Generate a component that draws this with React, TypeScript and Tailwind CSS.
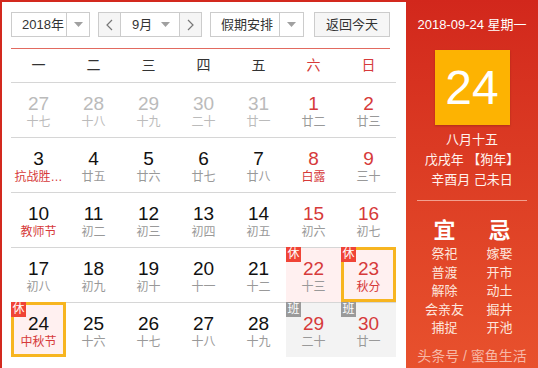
import React from "react";

type Day = {
  n: number;
  l: string;
  prev?: boolean;
  red?: boolean;
  lred?: boolean;
  badge?: "休" | "班";
  bg?: "pink" | "gray";
  sel?: boolean;
};

const rows: Day[][] = [
  [
    { n: 27, l: "十七", prev: true },
    { n: 28, l: "十八", prev: true },
    { n: 29, l: "十九", prev: true },
    { n: 30, l: "二十", prev: true },
    { n: 31, l: "廿一", prev: true },
    { n: 1, l: "廿二", red: true },
    { n: 2, l: "廿三", red: true },
  ],
  [
    { n: 3, l: "抗战胜…", lred: true },
    { n: 4, l: "廿五" },
    { n: 5, l: "廿六" },
    { n: 6, l: "廿七" },
    { n: 7, l: "廿八" },
    { n: 8, l: "白露", red: true, lred: true },
    { n: 9, l: "三十", red: true },
  ],
  [
    { n: 10, l: "教师节", lred: true },
    { n: 11, l: "初二" },
    { n: 12, l: "初三" },
    { n: 13, l: "初四" },
    { n: 14, l: "初五" },
    { n: 15, l: "初六", red: true },
    { n: 16, l: "初七", red: true },
  ],
  [
    { n: 17, l: "初八" },
    { n: 18, l: "初九" },
    { n: 19, l: "初十" },
    { n: 20, l: "十一" },
    { n: 21, l: "十二" },
    { n: 22, l: "十三", red: true, badge: "休", bg: "pink" },
    { n: 23, l: "秋分", red: true, lred: true, badge: "休", bg: "pink", sel: true },
  ],
  [
    { n: 24, l: "中秋节", lred: true, badge: "休", bg: "pink", sel: true },
    { n: 25, l: "十六" },
    { n: 26, l: "十七" },
    { n: 27, l: "十八" },
    { n: 28, l: "十九" },
    { n: 29, l: "二十", red: true, badge: "班", bg: "gray" },
    { n: 30, l: "廿一", red: true, badge: "班", bg: "gray" },
  ],
];

const weekdays = ["一", "二", "三", "四", "五", "六", "日"];

const yi = ["祭祀", "普渡", "解除", "会亲友", "捕捉"];
const ji = ["嫁娶", "开市", "动土", "掘井", "开池"];

function Caret() {
  return (
    <svg width="9" height="5" viewBox="0 0 9 5">
      <path d="M0 0 L9 0 L4.5 5 Z" fill="#a0a0a0" />
    </svg>
  );
}

function Chevron({ dir }: { dir: "left" | "right" }) {
  return (
    <svg width="7" height="12" viewBox="0 0 7 12">
      <polyline
        points={dir === "left" ? "6,1 1,6 6,11" : "1,1 6,6 1,11"}
        fill="none"
        stroke="#777"
        strokeWidth="1.2"
      />
    </svg>
  );
}

function Cell({ d }: { d: Day }) {
  const bg = d.bg === "pink" ? "bg-[#fff0f0]" : d.bg === "gray" ? "bg-[#f3f3f3]" : "";
  const num = d.prev ? "text-[#bbbbbb]" : d.red ? "text-[#d63a3a]" : "text-[#111]";
  const lunar = d.prev ? "text-[#bbbbbb]" : d.lred ? "text-[#d63a3a]" : "text-[#999]";
  return (
    <div className={`relative h-[54px] flex flex-col items-center pt-[10px] ${bg}`}>
      {d.sel && <div className="absolute -top-px left-0 right-0 bottom-0 border-[3px] border-[#f7b520]" />}
      <span className={`text-[19px] leading-[21px] font-['Liberation_Sans',sans-serif] ${num}`}>{d.n}</span>
      <span className={`text-[12px] leading-[17px] ${lunar}`}>{d.l}</span>
      {d.badge && (
        <span
          className={`absolute left-0 -top-px w-[15px] h-[15px] text-[12px] leading-[15px] text-center text-white ${
            d.badge === "休" ? "bg-[#f04436]" : "bg-[#9a9a9a]"
          }`}
        >
          {d.badge}
        </span>
      )}
    </div>
  );
}

export default function App() {
  return (
    <div className="flex w-[538px] h-[368px] overflow-hidden font-['Liberation_Sans','Noto_Sans_CJK_SC',sans-serif]">
      {/* calendar side */}
      <div className="w-[406px] bg-white border-t-2 border-l-2 border-[#d3291e] pl-[9px] pt-[10px]">
        <div className="flex h-[25px] text-[13px] text-[#333]">
          <div className="flex w-[79px] border border-[#cccccc]">
            <div className="flex-1 flex items-center pl-[10px]">2018年</div>
            <div className="w-[23px] border-l border-[#cccccc] flex items-center justify-center">
              <Caret />
            </div>
          </div>
          <div className="ml-[8px] flex w-[104px] border border-[#cccccc]">
            <div className="w-[22px] bg-[#f5f5f5] border-r border-[#cccccc] flex items-center justify-center">
              <Chevron dir="left" />
            </div>
            <div className="flex-1 flex items-center pl-[11px]">9月</div>
            <div className="w-[18px] flex items-center justify-start">
              <Caret />
            </div>
            <div className="w-[22px] bg-[#f5f5f5] border-l border-[#cccccc] flex items-center justify-center">
              <Chevron dir="right" />
            </div>
          </div>
          <div className="ml-[8px] flex w-[94px] border border-[#cccccc]">
            <div className="flex-1 flex items-center pl-[10px]">假期安排</div>
            <div className="w-[24px] border-l border-[#cccccc] flex items-center justify-center">
              <Caret />
            </div>
          </div>
          <div className="ml-[10px] w-[76px] border border-[#cccccc] bg-[#f6f6f6] flex items-center justify-center">
            返回今天
          </div>
        </div>

        <div className="mt-[11px] w-[379px] h-px bg-[#e26a60]" />

        <div className="w-[385px]">
          <div className="grid grid-cols-7 h-[33px] items-center text-[14px]">
            {weekdays.map((w, i) => (
              <div key={w} className={`text-center ${i >= 5 ? "text-[#d63a3a]" : "text-[#333]"}`}>
                {w}
              </div>
            ))}
          </div>
          {rows.map((r, i) => (
            <div key={i} className="grid grid-cols-7 border-t border-[#d6d6d6]">
              {r.map((d, j) => (
                <Cell key={j} d={d} />
              ))}
            </div>
          ))}
        </div>
      </div>

      {/* detail side */}
      <div className="w-[132px] bg-linear-to-b from-[#d2271c] to-[#e8512d] flex flex-col items-center pt-[16px] text-white">
        <div className="text-[13px] leading-[18px]">2018-09-24 星期一</div>
        <div className="mt-[16px] w-[75px] h-[75px] bg-[#fdb302] shadow-[0_1px_2px_rgba(0,0,0,0.2)] flex items-center justify-center text-[48px] leading-none font-['Liberation_Sans',sans-serif]">
          24
        </div>
        <div className="mt-[5px] text-[13px] leading-[20px] text-center text-[#fff3ee]">
          <div>八月十五</div>
          <div>戊戌年 【狗年】</div>
          <div>辛酉月 己未日</div>
        </div>
        <div className="mt-[10px] w-[110px] h-px bg-[#f2a08f]" />
        <div className="mt-[16px] w-[110px] grid grid-cols-2 text-center">
          <div>
            <div className="text-[22px] leading-[28px] font-semibold">宜</div>
            {yi.map((t) => (
              <div key={t} className="text-[13px] leading-[18.5px] text-[#fde6de]">
                {t}
              </div>
            ))}
          </div>
          <div>
            <div className="text-[22px] leading-[28px] font-semibold">忌</div>
            {ji.map((t) => (
              <div key={t} className="text-[13px] leading-[18.5px] text-[#fde6de]">
                {t}
              </div>
            ))}
          </div>
        </div>
        <div className="mt-[9px] text-[14px] leading-[18px] text-[#f7b7a6] whitespace-nowrap">头条号 / 蜜鱼生活</div>
      </div>
    </div>
  );
}
